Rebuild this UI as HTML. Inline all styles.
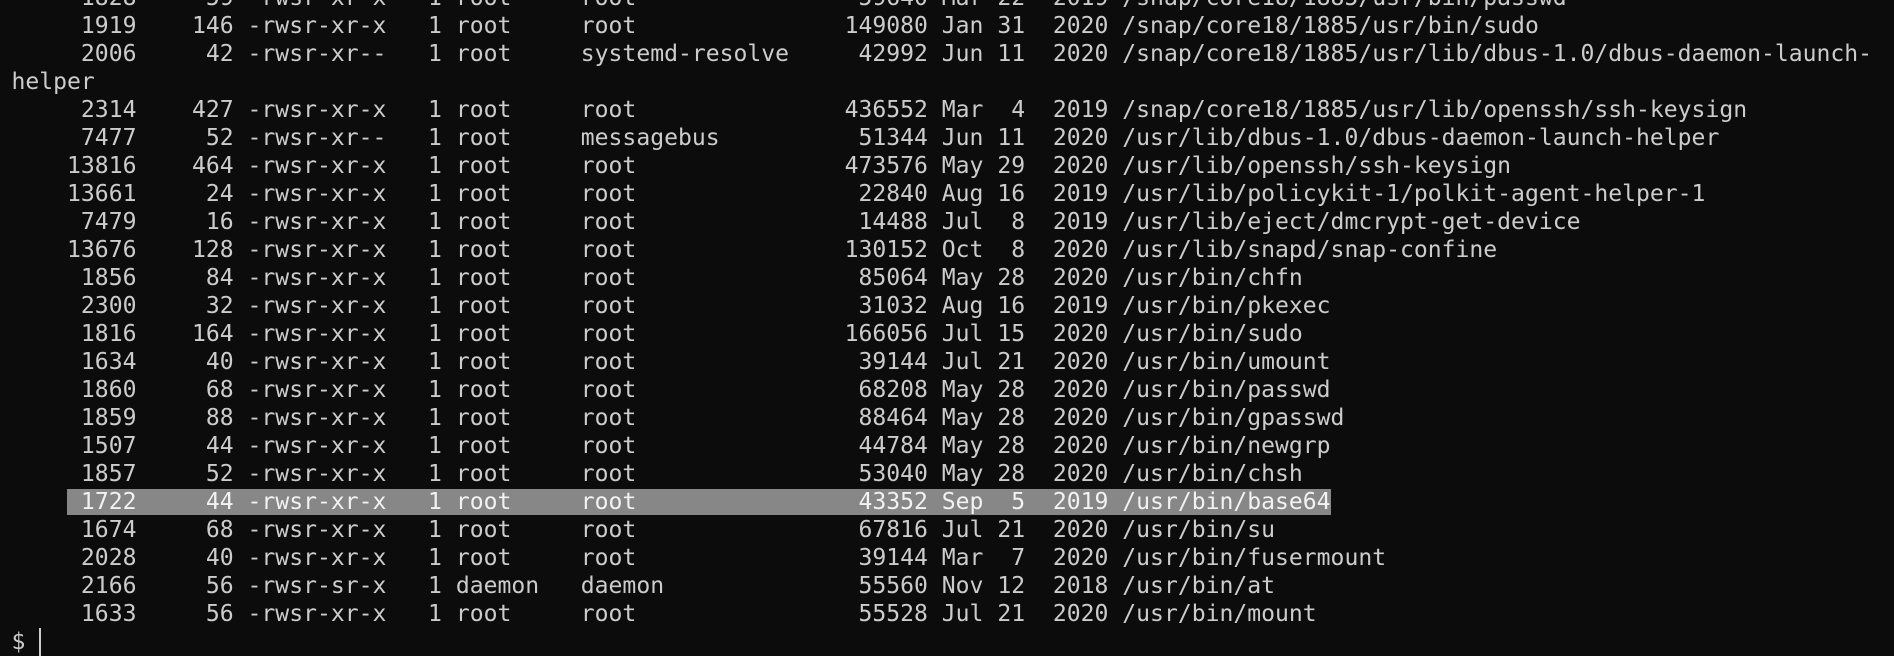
<!DOCTYPE html>
<html><head><meta charset="utf-8"><style>
html,body{margin:0;padding:0;background:#0c0c0c;width:1894px;height:635px;overflow:hidden}
pre{position:absolute;left:11.5px;top:-16.5px;margin:0;font-family:"DejaVu Sans Mono","Liberation Mono",monospace;font-size:23.07px;line-height:28px;color:#cccccc;white-space:pre}
.h{background:#878787;color:#f2f2f2}
.c{display:inline-block;width:2px;height:28px;background:#cccccc;vertical-align:top}
</style></head><body><pre>     1828     59 -rwsr-xr-x   1 root     root                59640 Mar 22  2019 /snap/core18/1885/usr/bin/passwd
     1919    146 -rwsr-xr-x   1 root     root               149080 Jan 31  2020 /snap/core18/1885/usr/bin/sudo
     2006     42 -rwsr-xr--   1 root     systemd-resolve     42992 Jun 11  2020 /snap/core18/1885/usr/lib/dbus-1.0/dbus-daemon-launch-
helper
     2314    427 -rwsr-xr-x   1 root     root               436552 Mar  4  2019 /snap/core18/1885/usr/lib/openssh/ssh-keysign
     7477     52 -rwsr-xr--   1 root     messagebus          51344 Jun 11  2020 /usr/lib/dbus-1.0/dbus-daemon-launch-helper
    13816    464 -rwsr-xr-x   1 root     root               473576 May 29  2020 /usr/lib/openssh/ssh-keysign
    13661     24 -rwsr-xr-x   1 root     root                22840 Aug 16  2019 /usr/lib/policykit-1/polkit-agent-helper-1
     7479     16 -rwsr-xr-x   1 root     root                14488 Jul  8  2019 /usr/lib/eject/dmcrypt-get-device
    13676    128 -rwsr-xr-x   1 root     root               130152 Oct  8  2020 /usr/lib/snapd/snap-confine
     1856     84 -rwsr-xr-x   1 root     root                85064 May 28  2020 /usr/bin/chfn
     2300     32 -rwsr-xr-x   1 root     root                31032 Aug 16  2019 /usr/bin/pkexec
     1816    164 -rwsr-xr-x   1 root     root               166056 Jul 15  2020 /usr/bin/sudo
     1634     40 -rwsr-xr-x   1 root     root                39144 Jul 21  2020 /usr/bin/umount
     1860     68 -rwsr-xr-x   1 root     root                68208 May 28  2020 /usr/bin/passwd
     1859     88 -rwsr-xr-x   1 root     root                88464 May 28  2020 /usr/bin/gpasswd
     1507     44 -rwsr-xr-x   1 root     root                44784 May 28  2020 /usr/bin/newgrp
     1857     52 -rwsr-xr-x   1 root     root                53040 May 28  2020 /usr/bin/chsh
    <span class="h"> 1722     44 -rwsr-xr-x   1 root     root                43352 Sep  5  2019 /usr/bin/base64</span>
     1674     68 -rwsr-xr-x   1 root     root                67816 Jul 21  2020 /usr/bin/su
     2028     40 -rwsr-xr-x   1 root     root                39144 Mar  7  2020 /usr/bin/fusermount
     2166     56 -rwsr-sr-x   1 daemon   daemon              55560 Nov 12  2018 /usr/bin/at
     1633     56 -rwsr-xr-x   1 root     root                55528 Jul 21  2020 /usr/bin/mount
$ <span class="c"></span></pre></body></html>
